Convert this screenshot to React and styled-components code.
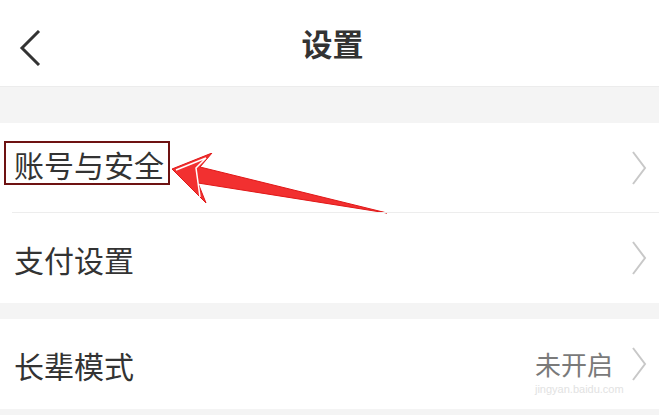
import styled, { createGlobalStyle } from "styled-components";

const GlobalStyle = createGlobalStyle`
  html, body {
    margin: 0;
    padding: 0;
    background: #f4f4f4;
    font-family: "Noto Sans CJK SC", "Noto Sans", sans-serif;
  }
`;

const Chevron = ({ color = "#c8c8c8", width = 16, height = 34, stroke = 2 }) => (
  <svg width={width} height={height} viewBox="0 0 16 34" fill="none">
    <path d="M2 1 L14 17 L2 33" stroke={color} strokeWidth={stroke} />
  </svg>
);

const BackIcon = () => (
  <svg width="22" height="36" viewBox="0 0 22 36" fill="none">
    <path d="M20 1 L3 18 L20 35" stroke="#333" strokeWidth="3" />
  </svg>
);

const Arrow = () => (
  <svg width="230" height="70" viewBox="0 0 230 70">
    <polygon
      points="0,16 40,0 28,14 215,60 26,30 34,50"
      fill="#f23030"
      stroke="#e01818"
      strokeWidth="1"
    />
    <polyline points="4,17 34,5 24,15 28,44" fill="none" stroke="#fff" strokeWidth="1.5" />
  </svg>
);

const Settings = () => {
  return (
    <Page>
      <GlobalStyle />
      <Header>
        <Back>
          <BackIcon />
        </Back>
        <Title>设置</Title>
      </Header>
      <Gap $h={36} />
      <Group>
        <Row $divider>
          <Highlight>账号与安全</Highlight>
          <ArrowWrap>
            <Arrow />
          </ArrowWrap>
          <Chevron />
        </Row>
        <Row>
          <Label>支付设置</Label>
          <Chevron />
        </Row>
      </Group>
      <Gap $h={16} />
      <Group>
        <Row>
          <Label>长辈模式</Label>
          <Right>
            <Value>未开启</Value>
            <Site>jingyan.baidu.com</Site>
            <Chevron />
          </Right>
        </Row>
      </Group>
      <Gap $h={10} />
    </Page>
  );
};

const Page = styled.div`
  width: 659px;
  height: 415px;
  overflow: hidden;
  background: #f4f4f4;
`;

const Header = styled.div`
  height: 87px;
  background: #fff;
  display: flex;
  align-items: center;
  justify-content: center;
  position: relative;
  border-bottom: 1px solid #ececec;
  box-sizing: border-box;
`;

const Back = styled.div`
  position: absolute;
  left: 19px;
  top: 30px;
  display: flex;
`;

const Title = styled.div`
  font-size: 31px;
  font-weight: 700;
  color: #333;
  line-height: 1;
  margin-top: -2px;
  margin-left: 6px;
`;

const Gap = styled.div`
  height: ${(p) => p.$h}px;
`;

const Group = styled.div`
  background: #fff;
`;

const Row = styled.div`
  height: 90px;
  display: flex;
  align-items: center;
  justify-content: space-between;
  padding: 0 12px 0 14px;
  position: relative;
  box-sizing: border-box;
  &::after {
    content: "";
    display: ${(p) => (p.$divider ? "block" : "none")};
    position: absolute;
    left: 12px;
    right: 0;
    bottom: 0;
    height: 1px;
    background: #ededed;
  }
`;

const Label = styled.div`
  font-size: 30px;
  color: #333;
  line-height: 1;
  margin-top: 2px;
`;

const Highlight = styled(Label)`
  border: 2px solid #6e1212;
  padding: 6px 4px 4px 8px;
  margin-left: -10px;
  margin-top: -10px;
`;

const ArrowWrap = styled.div`
  position: absolute;
  left: 172px;
  top: 30px;
  display: flex;
`;

const Right = styled.div`
  display: flex;
  align-items: center;
  gap: 18px;
  position: relative;
`;

const Value = styled.div`
  font-size: 26px;
  color: #7a7a7a;
  line-height: 1;
`;

const Site = styled.div`
  position: absolute;
  left: 0;
  top: 36px;
  font-family: "Liberation Sans", Arial, sans-serif;
  font-size: 11px;
  color: #e2e2e2;
  pointer-events: none;
`;

export default Settings;
